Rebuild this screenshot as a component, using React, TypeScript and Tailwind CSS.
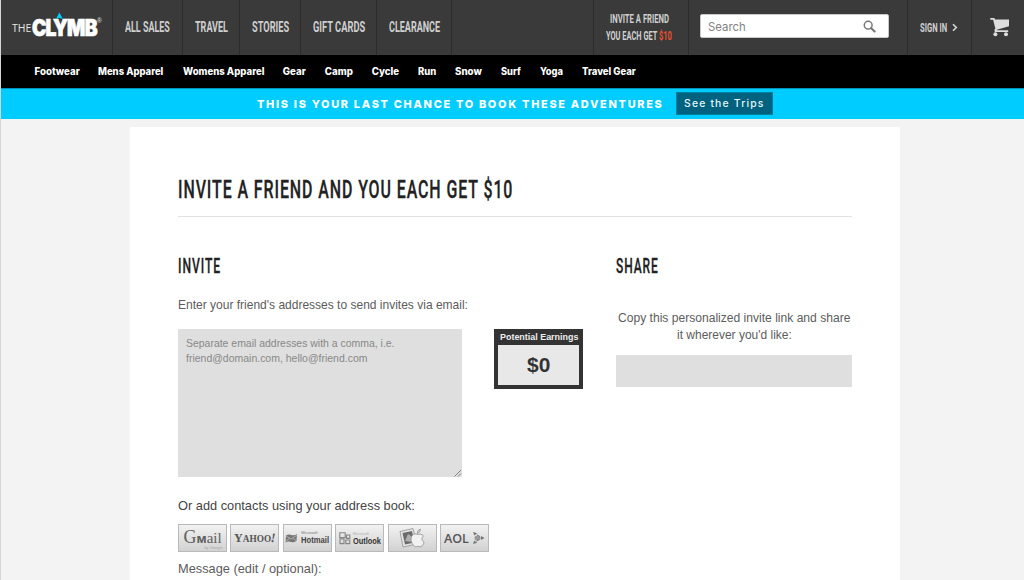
import React, { useLayoutEffect, useRef, useState } from "react";

/** One line of text, set horizontally condensed or expanded to a given width. */
function Fit({ w, className = "", children }: { w: number; className?: string; children: React.ReactNode }) {
  const ref = useRef<HTMLSpanElement>(null);
  const [scale, setScale] = useState(1);
  useLayoutEffect(() => {
    if (ref.current) setScale(w / ref.current.offsetWidth);
  }, [w]);
  return (
    <span className="block shrink-0 whitespace-nowrap" style={{ width: w }}>
      <span ref={ref} className={`block w-max origin-left ${className}`} style={{ transform: `scaleX(${scale})` }}>
        {children}
      </span>
    </span>
  );
}

const arial = "font-['Liberation_Sans',Arial,sans-serif]";

const topNav = [
  { label: "ALL SALES", w: 45, cell: "w-[70px]" },
  { label: "TRAVEL", w: 33, cell: "w-[57px]" },
  { label: "STORIES", w: 37, cell: "w-[61px]" },
  { label: "GIFT CARDS", w: 52, cell: "w-[76px]" },
  { label: "CLEARANCE", w: 51, cell: "w-[75px]" },
];

const subNav: [string, number][] = [
  ["Footwear", 45],
  ["Mens Apparel", 65.5],
  ["Womens Apparel", 81],
  ["Gear", 23],
  ["Camp", 28],
  ["Cycle", 27],
  ["Run", 18.5],
  ["Snow", 27],
  ["Surf", 20],
  ["Yoga", 23],
  ["Travel Gear", 54],
];

function Logo() {
  return (
    <div className="relative flex h-full w-[111px] shrink-0 items-center pl-[11px] text-white">
      <Fit w={19} className="font-['Open_Sans',sans-serif] text-[11px] font-normal leading-[14px] text-[#e6e6e6]">THE</Fit>
      <Fit w={65} className="ml-[1px] font-['Inter',sans-serif] text-[22.5px] font-black leading-[26px] tracking-[-1px] [-webkit-text-stroke:0.7px_white]">CLYMB</Fit>
      <svg className="absolute left-[53.5px] top-[12px]" width="9" height="8" viewBox="0 0 9 8">
        <path d="M4.3 0.4 L8 7 L4.4 6 L1 7 Z" fill="#00ccff" />
      </svg>
      <span className="absolute left-[96px] top-[17px] font-['Liberation_Sans',sans-serif] text-[6.5px] leading-[8px] text-[#cccccc]">®</span>
    </div>
  );
}

function Header() {
  return (
    <header className="flex h-[55px] bg-[#3a3a3a] font-['Roboto',sans-serif] font-bold text-[#cfcfcf]">
      <Logo />
      {topNav.map((n) => (
        <div key={n.label} className={`flex shrink-0 items-center border-l border-[#2c2c2c] pl-[12px] ${n.cell}`}>
          <Fit w={n.w} className="text-[14.5px] leading-[20px]">{n.label}</Fit>
        </div>
      ))}
      <div className="flex-1 border-l border-[#2c2c2c]" />
      <div className="flex w-[95px] shrink-0 flex-col items-center border-l border-[#2c2c2c] pr-[4px] pt-[10px] text-[12.5px] leading-[17px]">
        <Fit w={59}>INVITE A FRIEND</Fit>
        <Fit w={66}>YOU EACH GET <span className="text-[#e8502d]">$10</span></Fit>
      </div>
      <div className="flex w-[219px] shrink-0 items-start border-l border-[#2c2c2c] pl-[11px] pt-[14px]">
        <div className="flex h-[24px] w-[189px] items-center justify-between rounded-[2px] border border-[#c9c9c9] bg-white pl-[7px] pr-[12px]">
          <Fit w={38} className="pt-px font-['Inter',sans-serif] text-[12px] font-normal leading-[16px] text-[#828282]">Search</Fit>
          <svg width="13" height="13" viewBox="0 0 13 13" fill="none" stroke="#777777">
            <circle cx="5.2" cy="5.2" r="3.9" strokeWidth="1.5" />
            <path d="M8 8 L11.6 11.5" strokeWidth="2.1" strokeLinecap="round" />
          </svg>
        </div>
      </div>
      <div className="flex w-[64px] shrink-0 items-center border-l border-[#2c2c2c] pl-[12px]">
        <Fit w={27} className="text-[12.5px] leading-[17px]">SIGN IN</Fit>
        <svg className="ml-[5px]" width="6" height="9" viewBox="0 0 6 9" fill="none">
          <path d="M1 1.2 L4.3 4.5 L1 7.8" stroke="#d8d8d8" strokeWidth="1.6" />
        </svg>
      </div>
      <div className="flex w-[53px] shrink-0 items-center border-l border-[#2c2c2c] pl-[18px]">
        <svg className="-mt-[2px]" width="20" height="20" viewBox="0 0 20 20" fill="#dddddd">
          <path d="M0.3 1 H4.4 L5 2.5 H19 V9.2 L6.8 12.8 L7 13.3 H18.2 V15 H4.8 L4.4 12.6 L5.4 11.8 L3.1 2.7 H0.3 Z" />
          <circle cx="5.4" cy="17.2" r="2" />
          <circle cx="16" cy="17.2" r="2" />
        </svg>
      </div>
    </header>
  );
}

function Providers() {
  const box =
    "flex h-[28px] w-[49px] shrink-0 items-center justify-center border border-[#b9b9b9] bg-linear-to-b from-[#f2f2f2] to-[#d2d2d2] text-[#555555]";
  return (
    <div className="flex gap-[3.4px]">
      <div className={`${box} flex-col pt-[2px]`}>
        <Fit w={38} className="font-['Liberation_Serif',serif] text-[15px] leading-[16px] text-[#606060]">
          <span className="text-[18px]">G</span><span className="font-['Open_Sans',sans-serif] text-[12px] font-bold">м</span>ail
        </Fit>
        <span className="-mt-[1px] ml-[22px] font-['Liberation_Sans',sans-serif] text-[4px] leading-[4px] text-[#aaaaaa]">by Google</span>
      </div>
      <div className={box}>
        <Fit w={41} className="font-['Liberation_Serif',serif] text-[9.5px] font-bold leading-[14px]">
          <span className="text-[12.5px]">Y</span>AHOO<span className="inline-block rotate-12 text-[13px]">!</span>
        </Fit>
      </div>
      <div className={`${box} gap-[3px]`}>
        <svg width="13" height="11" viewBox="0 0 12 11">
          <path d="M0.5 2.5 Q3 0.8 6 2 Q9 3 11.5 1 L11 8 Q8 10 5.5 9 Q3 8 0 9.5 Z" fill="#777777" />
          <path d="M0.5 3 L5.5 6 L11.5 2 M0 8.5 L4 5.5 M11 8 L7.5 5" stroke="#d0d0d0" strokeWidth="0.6" fill="none" />
        </svg>
        <div className={`flex flex-col ${arial}`}>
          <span className="text-[4px] leading-[4px] text-[#777777]">Microsoft</span>
          <Fit w={28} className="text-[9px] font-bold leading-[10px] text-[#444444]">Hotmail</Fit>
        </div>
      </div>
      <div className={`${box} gap-[2px]`}>
        <svg width="12" height="13" viewBox="0 0 12 13" fill="none" stroke="#858585" strokeWidth="1.1">
          <path d="M0.8 0.8 H6.2 V5.6 H0.8 Z M7.5 3 H10.8 V6.4 H7.5 Z M1 7 H5 V11.6 H1 Z M6.8 8 H10.8 V11.6 H6.8 Z" />
        </svg>
        <div className={`flex flex-col pt-px ${arial}`}>
          <span className="text-[4px] leading-[4px] text-[#b0b0b0]">Microsoft</span>
          <Fit w={28} className="text-[9px] font-bold leading-[10px] text-[#333333]">Outlook</Fit>
        </div>
      </div>
      <div className={box}>
        <svg width="28" height="22" viewBox="0 0 28 22">
          <path d="M2 4.5 L15 1.5 L19 17 L5 20 Z" fill="#e6e6e6" stroke="#999999" strokeWidth="0.9" />
          <path d="M4.5 6 L14 4 L16.5 15.5 L7 17.5 Z" fill="#6a6a6a" />
          <path d="M7 14 L10 7 L13 9 L14 15 Z" fill="#b0b0b0" />
          <path d="M19.5 7.5 C17 6 13 7.5 13 12 C13 16 16 20 18.2 19.8 C19.4 19.6 20 19 21.2 19.6 C23.5 20.5 26 17 26 15 C23.6 14 23.2 10.4 25.5 9 C24 7 21.4 6.8 19.5 7.5 Z" fill="#f1f1f1" stroke="#8a8a8a" strokeWidth="0.8" />
          <path d="M19.3 6.6 Q19 3 22.4 2 Q22.6 5.4 19.3 6.6 Z" fill="#dddddd" stroke="#8a8a8a" strokeWidth="0.7" />
        </svg>
      </div>
      <div className={`${box} gap-[3px]`}>
        <Fit w={25} className="pt-px font-['Open_Sans',sans-serif] text-[12px] font-semibold leading-[14px]">AOL</Fit>
        <svg width="13" height="14" viewBox="0 0 13 14" fill="#777777">
          <path d="M1 1 L5.3 2.2 L2.3 4.4 Z M1 13 L2.3 9.4 L5.3 11.8 Z M9 5 L12.6 7 L9 9 Z" />
          <circle cx="5" cy="7" r="2.5" fill="#999999" />
          <path d="M5 4 Q8.5 4.5 8 7.4 Q7 10 4.6 9.8" stroke="#777777" fill="none" />
        </svg>
      </div>
    </div>
  );
}

export default function App() {
  return (
    <div className="h-[580px] w-[1024px] overflow-hidden border-l border-[#d5d5d5] bg-[#f3f3f3]">
      <Header />
      <nav className="flex h-[33px] gap-[18.95px] bg-black pl-[33.5px] pt-[10px]">
        {subNav.map(([label, w]) => (
          <Fit key={label} w={w} className="font-['Inter',sans-serif] text-[9.7px] font-extrabold leading-[14px] text-white">{label}</Fit>
        ))}
      </nav>
      <div className="flex h-[31px] items-center border-t border-[#0090b8] bg-[#00ccff] pl-[256px]">
        <Fit w={407} className="font-['Inter',sans-serif] text-[11px] font-extrabold leading-[15px] tracking-[1.7px] text-white">THIS IS YOUR LAST CHANCE TO BOOK THESE ADVENTURES</Fit>
        <div className="-mt-px ml-[12px] flex h-[23px] w-[97px] items-center border border-[#0080a0] bg-[#00627f] pl-[7px]">
          <Fit w={81} className="font-['Inter',sans-serif] text-[10.5px] font-medium leading-[14px] tracking-[1.2px] text-[#e6f5f9]">See the Trips</Fit>
        </div>
      </div>

      <main className={`ml-[129px] mt-[8px] h-[460px] w-[770px] bg-white px-[48px] pt-[46px] text-[#5c5c5c] ${arial}`}>
        <h1 className="h-[43.5px] border-b-[1.5px] border-[#e2e2e2] font-['Roboto',sans-serif] text-[#222222]">
          <Fit w={335.5} className="text-[26.5px] font-medium leading-[32px] tracking-[1.5px] [-webkit-text-stroke:0.3px_#222]">INVITE A FRIEND AND YOU EACH GET $10</Fit>
        </h1>

        <div className="mt-[38.5px] flex justify-between">
          <section className="w-[405px]">
            <h2 className="font-['Roboto',sans-serif] text-[#222222]">
              <Fit w={43} className="text-[19.5px] font-medium leading-[24px] tracking-[1.5px] [-webkit-text-stroke:0.3px_#222]">INVITE</Fit>
            </h2>
            <p className="mt-[17px]"><Fit w={290} className="text-[13px] leading-[18px]">Enter your friend's addresses to send invites via email:</Fit></p>
            <div className="mt-[15px] flex items-start justify-between">
              <div className="flex h-[148px] w-[283.5px] flex-col bg-[#dfdfdf] pl-[8px] pt-[7px] text-[11px] leading-[14.5px] text-[#888888]">
                <Fit w={209}>Separate email addresses with a comma, i.e.</Fit>
                <Fit w={181}>friend@domain.com, hello@friend.com</Fit>
                <svg className="mt-auto self-end" width="8" height="8" viewBox="0 0 8 8" stroke="#777777" strokeWidth="0.9">
                  <path d="M0.5 7.5 L7 1 M4 7.5 L7 4.5" />
                </svg>
              </div>
              <div className="h-[60px] w-[89px] bg-[#333333] px-[4px]">
                <div className="pl-[2px] pb-px"><Fit w={78} className="text-[9.5px] font-bold leading-[15px] text-[#eeeeee]">Potential Earnings</Fit></div>
                <div className="flex h-[40px] items-center justify-center bg-[#e8e8e8]">
                  <Fit w={23} className="text-[20px] font-bold leading-[24px] text-[#333333]">$0</Fit>
                </div>
              </div>
            </div>
            <p className="mt-[20px] text-[#444444]"><Fit w={237} className="text-[13.5px] leading-[18px]">Or add contacts using your address book:</Fit></p>
            <div className="mt-[9px]"><Providers /></div>
            <p className="mt-[8px]"><Fit w={144} className="text-[13.5px] leading-[18px]">Message (edit / optional):</Fit></p>
          </section>

          <section className="w-[236px]">
            <h2 className="font-['Roboto',sans-serif] text-[#222222]">
              <Fit w={43} className="text-[19.5px] font-medium leading-[24px] tracking-[1.5px] [-webkit-text-stroke:0.3px_#222]">SHARE</Fit>
            </h2>
            <div className="mt-[31px] flex flex-col items-center text-[12.5px] leading-[17px]">
              <Fit w={232}>Copy this personalized invite link and share</Fit>
              <Fit w={115}>it wherever you'd like:</Fit>
            </div>
            <div className="mt-[10.5px] h-[32px] bg-[#dfdfdf]" />
          </section>
        </div>
      </main>
    </div>
  );
}
